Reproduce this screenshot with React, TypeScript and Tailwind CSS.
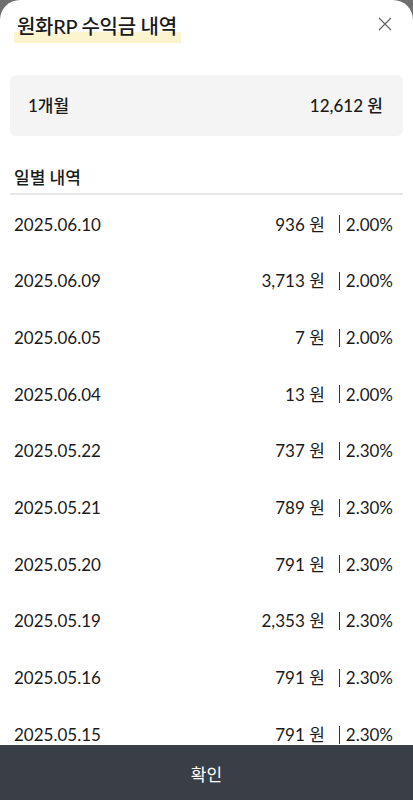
import React from 'react';

const rows = [
  { date: '2025.06.10', amount: '936', rate: '2.00%' },
  { date: '2025.06.09', amount: '3,713', rate: '2.00%' },
  { date: '2025.06.05', amount: '7', rate: '2.00%' },
  { date: '2025.06.04', amount: '13', rate: '2.00%' },
  { date: '2025.05.22', amount: '737', rate: '2.30%' },
  { date: '2025.05.21', amount: '789', rate: '2.30%' },
  { date: '2025.05.20', amount: '791', rate: '2.30%' },
  { date: '2025.05.19', amount: '2,353', rate: '2.30%' },
  { date: '2025.05.16', amount: '791', rate: '2.30%' },
  { date: '2025.05.15', amount: '791', rate: '2.30%' },
];

const font = { fontFamily: 'Lato, "Noto Sans CJK KR", sans-serif' };

export default function App() {
  return (
    <div className="h-[800px] w-[413px] bg-[#6e6e6e] overflow-hidden" style={font}>
      <div className="h-full bg-white rounded-t-[20px] flex flex-col text-[#1a1a1a]">
        {/* header */}
        <div className="h-[50px] flex items-center justify-between pl-[14px] pr-[14px] pt-[2px]">
          <h1 className="relative text-[20px] leading-none font-medium tracking-[-0.3px]">
            <span className="absolute left-0 right-[-4px] bottom-[-7px] h-[11px] bg-[#fcf3cf]" />
            <span className="relative pl-[3px]">원화RP 수익금 내역</span>
          </h1>
          <button className="w-[28px] h-[28px] flex items-center justify-center -mt-[4px]">
            <svg width="14" height="14" viewBox="0 0 14 14" fill="none" stroke="#666" strokeWidth="1.3">
              <path d="M1 1L13 13M13 1L1 13" />
            </svg>
          </button>
        </div>

        {/* body */}
        <div className="flex-1 overflow-hidden px-[10px] pt-[25px]">
          <div className="h-[61px] rounded-[6px] bg-[#f4f4f4] flex items-center justify-between pl-[18px] pr-[20px] text-[17px] font-medium">
            <span>1개월</span>
            <span>12,612 원</span>
          </div>

          <div className="mt-[33px] pl-[4px] pb-[6px] border-b-2 border-[#e6e6e6] text-[17px] font-medium leading-[18px]">
            일별 내역
          </div>

          <div className="pt-[1px]">
            {rows.map((r) => (
              <div key={r.date} className="h-[56.7px] flex items-center justify-between pl-[4px] pr-[10px] text-[17px]">
                <span>{r.date}</span>
                <div className="flex items-center">
                  <span>{r.amount} 원</span>
                  <span className="ml-[14px] h-[18px] border-l-[1.5px] border-[#333]" />
                  <span className="ml-[6px]">{r.rate}</span>
                </div>
              </div>
            ))}
          </div>
        </div>

        {/* footer button */}
        <button className="h-[55px] shrink-0 bg-[#3a3e46] text-white text-[17px] pt-[4px]">확인</button>
      </div>
    </div>
  );
}
